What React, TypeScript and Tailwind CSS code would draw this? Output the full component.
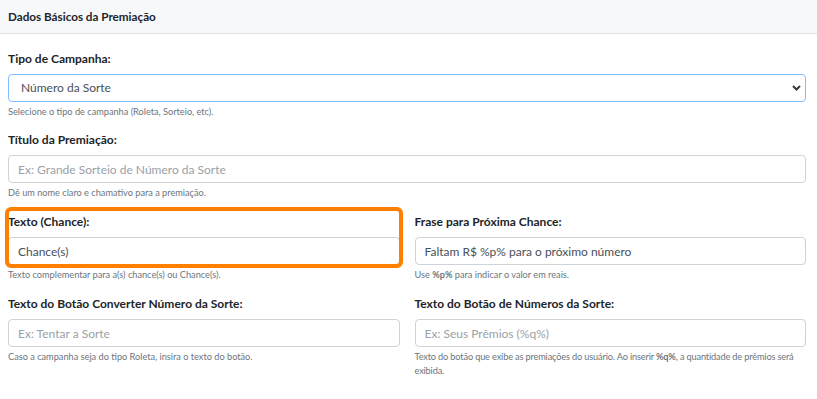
import React from "react";

const font = { fontFamily: "Lato, 'Noto Sans', sans-serif" };

function Label({ children }: { children: React.ReactNode }) {
  return <label className="block text-[12px] leading-[16px] font-bold text-[#212529] mb-[7px]">{children}</label>;
}

function Help({ children, tight }: { children: React.ReactNode; tight?: boolean }) {
  return (
    <p className={tight ? "mt-[3px] text-[9.2px] leading-[14px] tracking-[-0.15px] text-[#6c757d]" : "mt-[3px] text-[9.2px] leading-[14px] text-[#6c757d]"}>
      {children}
    </p>
  );
}

function TextInput({ placeholder, value }: { placeholder?: string; value?: string }) {
  return (
    <input
      type="text"
      placeholder={placeholder}
      defaultValue={value}
      className="block w-full h-[28px] px-[9px] rounded-[4px] border border-[#ced4da] bg-white text-[12px] text-[#495057] placeholder:text-[#9aa1a8] outline-none"
    />
  );
}

export default function App() {
  return (
    <div className="w-[817px] h-[399px] bg-white overflow-hidden" style={font}>
      <div className="h-[34px] bg-[#f7f8fa] border-b border-[#dee2e6] flex items-center px-2">
        <h3 className="text-[11.7px] font-bold text-[#212529]">Dados Básicos da Premiação</h3>
      </div>

      <div className="pl-2 pr-[11px] pt-[17px]">
        <div className="mb-[13px]">
          <Label>Tipo de Campanha:</Label>
          <div className="relative">
            <select
              defaultValue="numero"
              className="block w-full h-[28px] pl-[12px] pr-8 rounded-[4px] border border-[#80bdff] bg-white text-[12px] text-[#495057] appearance-none outline-none"
            >
              <option value="roleta">Roleta</option>
              <option value="numero">Número da Sorte</option>
              <option value="sorteio">Sorteio</option>
            </select>
            <svg className="absolute right-[5px] top-[11px] w-[9px] h-[6px]" viewBox="0 0 9 6" fill="none">
              <path d="M1 1l3.5 3.5L8 1" stroke="#343a40" strokeWidth="2" />
            </svg>
          </div>
          <Help>Selecione o tipo de campanha (Roleta, Sorteio, etc).</Help>
        </div>

        <div className="mb-[10px]">
          <Label>Título da Premiação:</Label>
          <TextInput placeholder="Ex: Grande Sorteio de Número da Sorte" />
          <Help>Dê um nome claro e chamativo para a premiação.</Help>
        </div>

        <div className="grid grid-cols-2 gap-x-[15px]">
          <div className="mb-[14px]">
            <div className="pt-[4px] rounded-[3px] outline-4 outline-[#ff8000] -outline-offset-1">
              <Label>Texto (Chance):</Label>
              <TextInput value="Chance(s)" />
            </div>
            <Help>Texto complementar para a(s) chance(s) ou Chance(s).</Help>
          </div>
          <div className="mb-[14px] pt-[4px]">
            <Label>Frase para Próxima Chance:</Label>
            <TextInput value="Faltam R$ %p% para o próximo número" />
            <Help>
              Use <b className="font-bold">%p%</b> para indicar o valor em reais.
            </Help>
          </div>

          <div>
            <Label>Texto do Botão Converter Número da Sorte:</Label>
            <TextInput placeholder="Ex: Tentar a Sorte" />
            <Help>Caso a campanha seja do tipo Roleta, insira o texto do botão.</Help>
          </div>
          <div>
            <Label>Texto do Botão de Números da Sorte:</Label>
            <TextInput placeholder="Ex: Seus Prêmios (%q%)" />
            <Help tight>
              Texto do botão que exibe as premiações do usuário. Ao inserir <b className="font-bold">%q%</b>, a quantidade de prêmios será exibida.
            </Help>
          </div>
        </div>
      </div>
    </div>
  );
}
